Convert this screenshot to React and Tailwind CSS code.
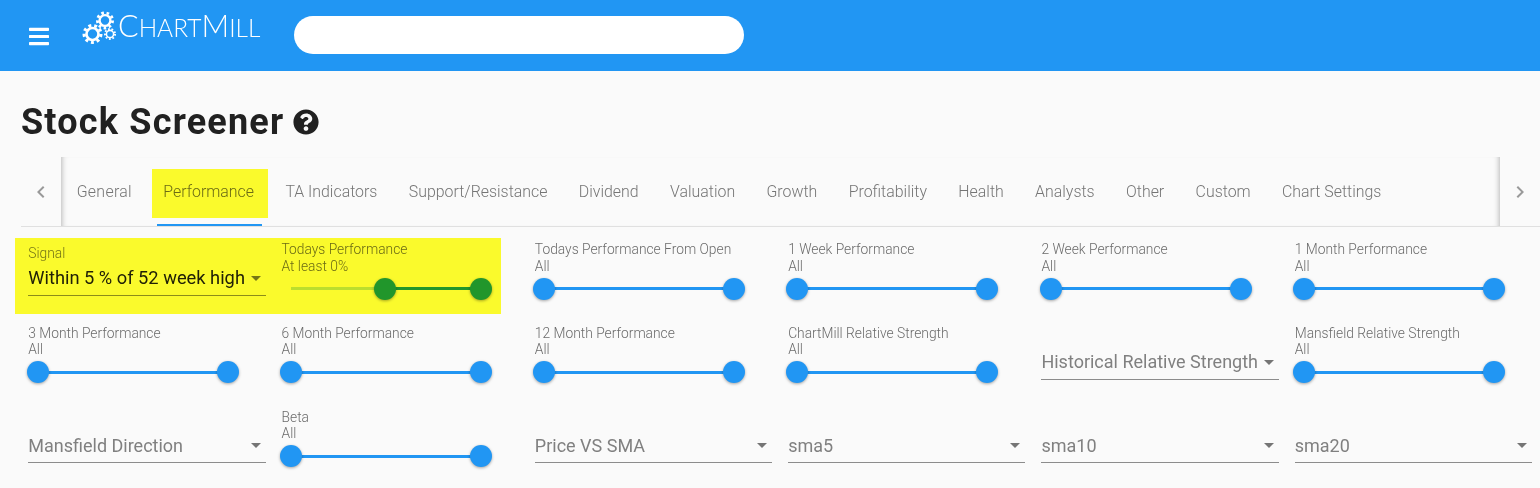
import React from "react";
import { FaBars, FaQuestionCircle } from "react-icons/fa";

const tabs = ["General","Performance","TA Indicators","Support/Resistance","Dividend","Valuation","Growth","Profitability","Health","Analysts","Other","Custom","Chart Settings"];

function Gear({ cx, cy, R }) {
  const rt = 0.84 * R;
  const circ = 2 * Math.PI * rt;
  return (
    <g fill="none" stroke="#fff">
      <circle cx={cx} cy={cy} r={0.6 * R} strokeWidth={0.26 * R} />
      <circle cx={cx} cy={cy} r={rt} strokeWidth={0.32 * R} strokeDasharray={`${circ / 18} ${circ / 18}`} />
    </g>
  );
}

function Logo() {
  return (
    <div className="flex items-end ml-[33px] -mt-[15px] h-[34px]">
      <svg width="36" height="34" viewBox="0 0 36 34" className="shrink-0">
        <Gear cx="23" cy="9.5" R="9" />
        <Gear cx="10.5" cy="23" R="10" />
        <Gear cx="28" cy="23" R="6" />
      </svg>
      <span className="mb-[2px] text-white font-['Lato',sans-serif] font-light text-[30.5px] leading-[31px] whitespace-nowrap">
        C<span className="text-[24.5px]">HART</span>M<span className="text-[24.5px]">ILL</span>
      </span>
    </div>
  );
}

function Slider({ title, sub = "All", from = 0 }) {
  return (
    <div className="px-2 pt-[1px]">
      <div className="text-[13.8px] leading-[16.5px] font-light text-[#6b6b6b] whitespace-nowrap">{title}</div>
      <div className="text-[13.8px] leading-[16.5px] font-light text-[#6b6b6b] whitespace-nowrap">{sub}</div>
      <div className="relative ml-[9.25px] w-[190px] h-[3px] mt-[13px]">
        <div className="absolute top-0 bottom-0 left-0 bg-[#bbdefb]" style={{ width: `${from}%` }} />
        <div className="absolute top-0 bottom-0 right-0 bg-[#2196f3]" style={{ left: `${from}%` }} />
        <div className="absolute top-[-9.5px] w-[22px] h-[22px] -ml-[11px] rounded-full bg-[#2196f3] shadow-[0_1px_3px_rgba(0,0,0,0.35)]" style={{ left: `${from}%` }} />
        <div className="absolute top-[-9.5px] left-full w-[22px] h-[22px] -ml-[11px] rounded-full bg-[#2196f3] shadow-[0_1px_3px_rgba(0,0,0,0.35)]" />
      </div>
    </div>
  );
}

function Select({ label, value, placeholder }) {
  return (
    <div className="px-2 flex flex-col justify-end pb-[28px]">
      {label && <div className="text-[13.8px] leading-[16px] font-light text-[#757575] mb-[1px]">{label}</div>}
      <div className="flex items-center justify-between h-[34px] border-b border-[#8c8c8c]">
        <span className={`leading-[24px] whitespace-nowrap ${value ? "text-[18.3px] text-[#212121]" : "text-[18px] text-[#808080]"}`}>{value || placeholder}</span>
        <span className="w-0 h-0 mr-[5px] border-x-[5px] border-x-transparent border-t-[5px] border-t-[#757575]" />
      </div>
    </div>
  );
}

function Chevron({ d }) {
  return (
    <div className="w-10 flex items-center justify-center text-[#999999]">
      <svg width="24" height="24" viewBox="0 0 24 24" fill="currentColor"><path d={d} /></svg>
    </div>
  );
}

export default function App() {
  return (
    <div className="w-[1540px] h-[488px] overflow-hidden bg-[#fafafa] font-['Roboto',sans-serif]">
      <header className="h-[71px] bg-[#2196f3] flex items-center">
        <FaBars className="ml-[29px] text-white w-[20px] h-[23px] mt-[1px]" />
        <Logo />
        <div className="ml-[34px] w-[450px] h-[38px] rounded-full bg-white -mt-[1px]" />
      </header>

      <div className="pl-[21px] pt-[28px] h-[86px] flex items-start">
        <h1 className="text-[36px] leading-[47px] font-bold text-[#212121] tracking-[1.2px]">Stock Screener</h1>
        <FaQuestionCircle className="ml-[9px] mt-[10px] w-[26px] h-[26px] text-[#212121]" />
      </div>

      <div className="ml-[21px] h-[70px] flex border-b border-[#e0e0e0]">
        <Chevron d="M15.41 16.59L10.83 12l4.58-4.59L14 6l-6 6 6 6 1.41-1.41z" />
        <div className="flex-1 flex shadow-[inset_6px_0_6px_-6px_rgba(0,0,0,0.35),inset_-6px_0_6px_-6px_rgba(0,0,0,0.35)] overflow-hidden">
          {tabs.map((t) => (
            <div key={t} className={`relative mx-2 px-[7.7px] flex items-center text-[15.9px] font-light whitespace-nowrap ${t === "General" ? "tracking-[0.3px]" : ""} ${t === "Performance" ? "text-[#6b6b6b]" : "text-[#757575]"}`}>
              {t}
              {t === "Performance" && (
                <>
                  <div className="absolute left-[1px] right-0 bottom-0 h-[2px] bg-[#2196f3]" />
                  <div className="absolute left-[-4px] right-[-6px] top-[12px] h-[49px] bg-[#ffff2d] mix-blend-multiply" />
                </>
              )}
            </div>
          ))}
        </div>
        <Chevron d="M8.59 16.59L13.17 12 8.59 7.41 10 6l6 6-6 6-1.41-1.41z" />
      </div>

      <div className="relative pl-[20.25px] pt-[13px] grid grid-cols-6 auto-rows-[83.8px]">
        <Select label="Signal" value="Within 5 % of 52 week high" />
        <Slider title="Todays Performance" sub="At least 0%" from={49.5} />
        <Slider title="Todays Performance From Open" />
        <Slider title="1 Week Performance" />
        <Slider title="2 Week Performance" />
        <Slider title="1 Month Performance" />

        <Slider title="3 Month Performance" />
        <Slider title="6 Month Performance" />
        <Slider title="12 Month Performance" />
        <Slider title="ChartMill Relative Strength" />
        <Select placeholder="Historical Relative Strength" />
        <Slider title="Mansfield Relative Strength" />

        <Select placeholder="Mansfield Direction" />
        <Slider title="Beta" />
        <Select placeholder="Price VS SMA" />
        <Select placeholder="sma5" />
        <Select placeholder="sma10" />
        <Select placeholder="sma20" />

        <div className="absolute left-[15px] top-[11px] w-[486px] h-[76px] bg-[#ffff2d] mix-blend-multiply" />
      </div>
    </div>
  );
}
